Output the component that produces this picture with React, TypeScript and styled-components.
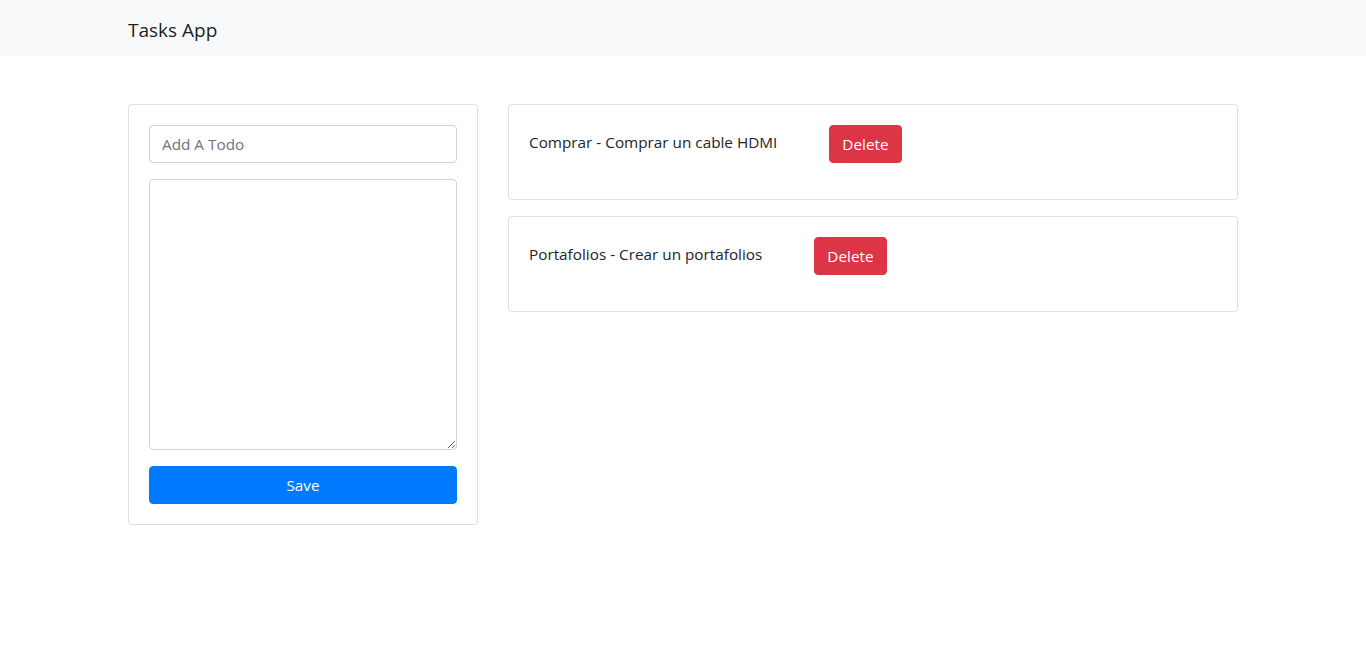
import React from "react";
import styled, { createGlobalStyle } from "styled-components";

const GlobalStyle = createGlobalStyle`
  *, *::before, *::after { box-sizing: border-box; }
  body {
    margin: 0;
    font-family: "Open Sans", "Noto Sans", sans-serif;
    font-size: 16px;
    line-height: 1.5;
    color: #212529;
    background: #fff;
  }
`;

const Navbar = styled.nav`
  background: #f8f9fa;
  height: 56px;
  display: flex;
  align-items: center;
`;

const Container = styled.div`
  width: 1140px;
  margin: 0 auto;
  padding: 0 15px;
`;

const Brand = styled.span`
  font-size: 19px;
  line-height: 30px;
  color: rgba(0, 0, 0, 0.9);
  display: inline-block;
  padding-top: 4px;
`;

const Main = styled(Container)`
  padding-top: 48px;
  display: grid;
  grid-template-columns: 350px 730px;
  column-gap: 30px;
  align-items: start;
`;

const Card = styled.div`
  border: 1px solid rgba(0, 0, 0, 0.125);
  border-radius: 4px;
  background: #fff;
  padding: 20px;
`;

const Form = styled.form`
  display: flex;
  flex-direction: column;
  gap: 16px;
  margin: 0;
`;

const fieldCss = `
  width: 100%;
  border: 1px solid #ced4da;
  border-radius: 4px;
  padding: 6px 12px;
  font-family: "Open Sans", "Noto Sans", sans-serif;
  font-size: 15.3px;
  line-height: 24px;
  color: #495057;
  background: #fff;
  display: block;
  &::placeholder { color: #6c757d; }
`;

const Input = styled.input`
  ${fieldCss}
  height: 38px;
`;

const TextArea = styled.textarea`
  ${fieldCss}
  height: 271px;
  resize: vertical;
`;

const Button = styled.button<{ $variant: "primary" | "danger"; $block?: boolean }>`
  display: inline-block;
  height: 38px;
  padding: 6px 12px;
  border-radius: 4px;
  border: 1px solid ${(p) => (p.$variant === "primary" ? "#007bff" : "#dc3545")};
  background: ${(p) => (p.$variant === "primary" ? "#007bff" : "#dc3545")};
  color: #fff;
  font-family: "Open Sans", "Noto Sans", sans-serif;
  font-size: 15.3px;
  line-height: 24px;
  width: ${(p) => (p.$block ? "100%" : "auto")};
  cursor: pointer;
`;

const TaskList = styled.div`
  display: flex;
  flex-direction: column;
  gap: 16px;
`;

const TaskCard = styled(Card)`
  height: 96px;
`;

const TaskRow = styled.div`
  display: flex;
  align-items: flex-start;
  gap: 52px;
`;

const TaskText = styled.span`
  font-size: 15.3px;
  line-height: 24px;
  padding-top: 5px;
`;

const tasks = [
  { title: "Comprar", description: "Comprar un cable HDMI" },
  { title: "Portafolios", description: "Crear un portafolios" },
];

export default function App() {
  return (
    <>
      <GlobalStyle />
      <Navbar>
        <Container>
          <Brand>Tasks App</Brand>
        </Container>
      </Navbar>
      <Main>
        <Card>
          <Form onSubmit={(e) => e.preventDefault()}>
            <Input placeholder="Add A Todo" />
            <TextArea />
            <Button $variant="primary" $block type="submit">
              Save
            </Button>
          </Form>
        </Card>
        <TaskList>
          {tasks.map((t) => (
            <TaskCard key={t.title}>
              <TaskRow>
                <TaskText>
                  {t.title} - {t.description}
                </TaskText>
                <Button $variant="danger">Delete</Button>
              </TaskRow>
            </TaskCard>
          ))}
        </TaskList>
      </Main>
    </>
  );
}
